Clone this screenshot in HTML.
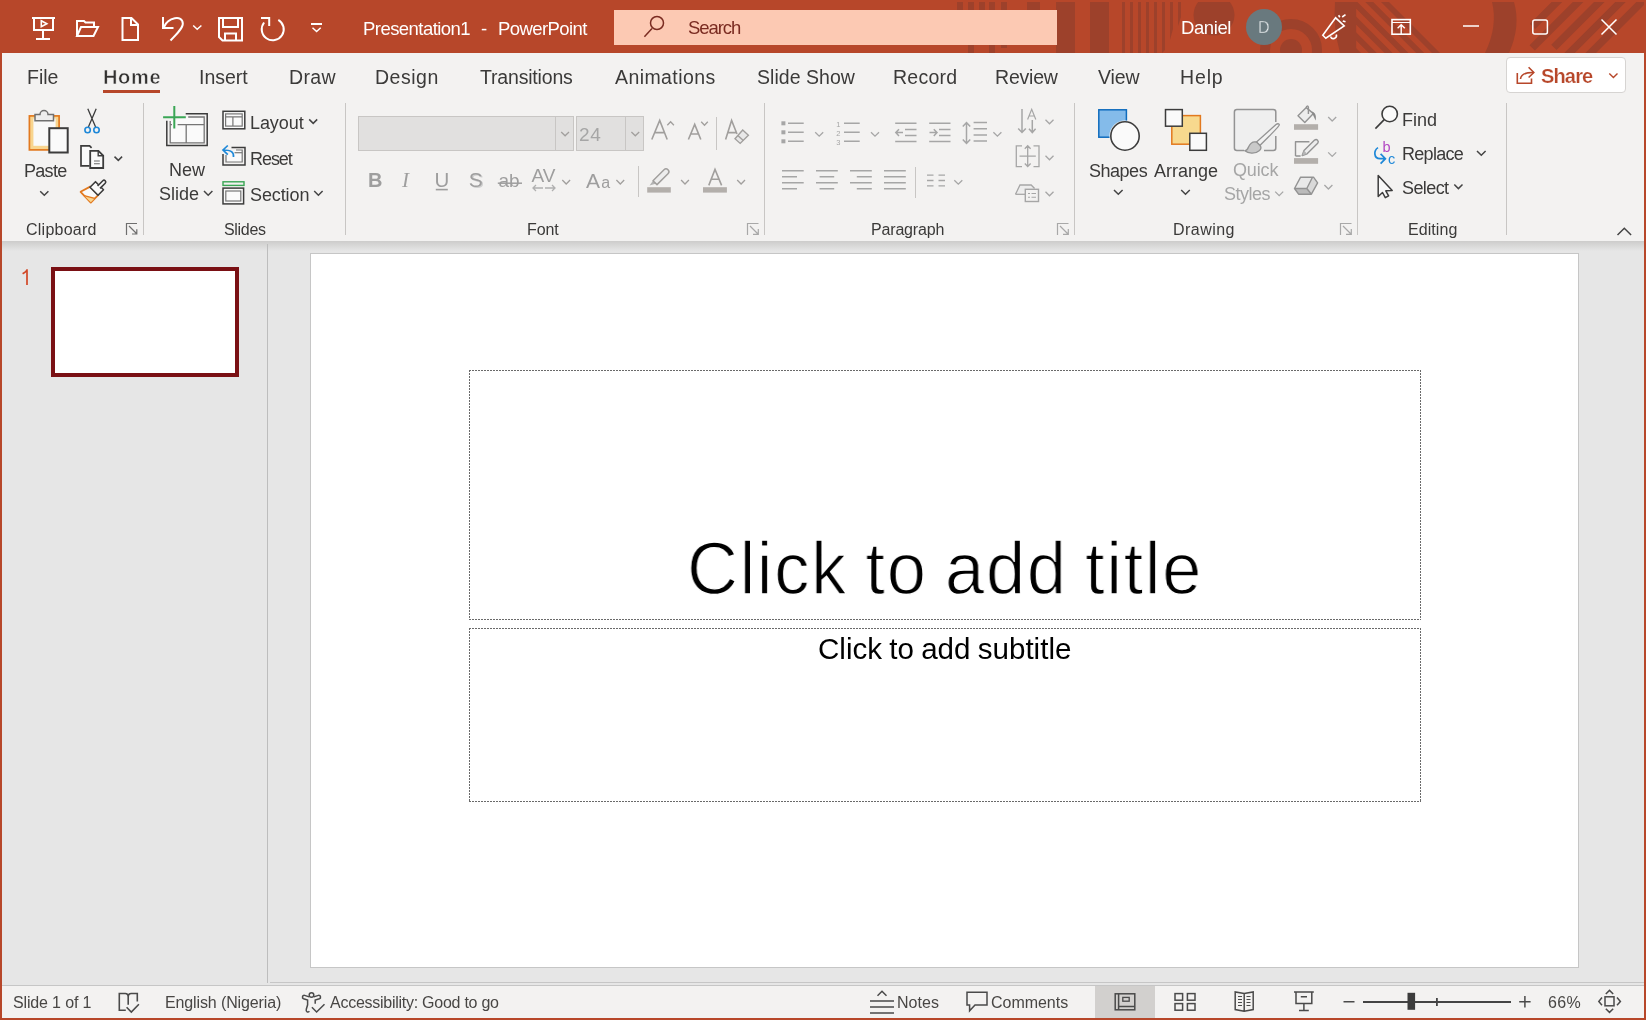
<!DOCTYPE html>
<html><head><meta charset="utf-8">
<style>
*{margin:0;padding:0;box-sizing:border-box}
html,body{width:1646px;height:1020px;overflow:hidden;background:#B7472A;font-family:"Liberation Sans",sans-serif;position:relative}
.a{position:absolute}
.t{position:absolute;white-space:nowrap;line-height:1;will-change:transform}
svg.ov{position:absolute;left:0;top:0;width:1646px;height:1020px;will-change:transform}
</style></head><body>
<!-- ribbon background -->
<div class="a" style="left:2px;top:53px;width:1642px;height:188px;background:#F3F2F1"></div>
<!-- main area -->
<div class="a" style="left:2px;top:241px;width:1642px;height:744px;background:#E6E6E6"></div>
<div class="a" style="left:2px;top:241px;width:1642px;height:10px;background:linear-gradient(#CDCCCB,#E6E6E6)"></div>
<!-- status bar -->
<div class="a" style="left:270px;top:982px;width:1374px;height:1px;background:#C6C6C6"></div>
<div class="a" style="left:2px;top:985px;width:1642px;height:1px;background:#C6C6C6"></div>
<div class="a" style="left:2px;top:986px;width:1642px;height:32px;background:#F3F2F1"></div>
<div class="a" style="left:1095px;top:986px;width:60px;height:32px;background:#D2D0CE"></div>
<!-- panel separator -->
<div class="a" style="left:267px;top:244px;width:1px;height:739px;background:#BDBDBD"></div>
<!-- thumbnail -->
<div class="a" style="left:51px;top:267px;width:188px;height:110px;border:4px solid #7A1014;background:#fff"></div>
<!-- slide -->
<div class="a" style="left:310px;top:253px;width:1269px;height:715px;background:#fff;border:1px solid #C6C6C6"></div>
<!-- share button -->
<div class="a" style="left:1506px;top:57px;width:120px;height:36px;background:#fff;border:1px solid #D6D4D2;border-radius:4px"></div>
<!-- font boxes -->
<div class="a" style="left:358px;top:116px;width:216px;height:35px;background:#E1E0DF;border:1px solid #C8C6C4"></div>
<div class="a" style="left:555px;top:117px;width:1px;height:33px;background:#C8C6C4"></div>
<div class="a" style="left:576px;top:116px;width:68px;height:35px;background:#E1E0DF;border:1px solid #C8C6C4"></div>
<div class="a" style="left:625px;top:117px;width:1px;height:33px;background:#C8C6C4"></div>
<svg class="ov" viewBox="0 0 1646 1020">
<defs>
<clipPath id="tb"><rect x="0" y="2" width="1644" height="51"/></clipPath>
<clipPath id="st1"><path d="M1356,2 H1390 L1441,53 H1356 Z"/></clipPath>
<clipPath id="st2"><path d="M1529,2 H1644 V53 H1529 Z"/></clipPath>
</defs>
<!-- ===== title bar pattern ===== -->
<g clip-path="url(#tb)" fill="#9D412B">
 <rect x="957" y="2" width="6" height="8"/>
 <rect x="968" y="2" width="6" height="51"/>
 <rect x="979" y="2" width="6" height="8"/>
 <rect x="989" y="2" width="6" height="51"/>
 <rect x="1001" y="2" width="6" height="46"/>
 <rect x="1027" y="2" width="13" height="8"/>
 <rect x="1056" y="2" width="19" height="51"/>
 <rect x="1090" y="2" width="19" height="51"/>
 <path d="M1122,2h3v51h-3z M1130,2h3v51h-3z M1138,2h3v51h-3z M1146,2h3v51h-3z M1154,2h3v51h-3z M1162,2h3v48l-3,3z M1170,2h3v27l-3,11z M1178,2h3v15l-3,9z"/>
 <circle cx="1214" cy="15" r="20.5"/>
 <circle cx="1291" cy="50" r="11"/>
 <circle cx="1291" cy="50" r="26" fill="none" stroke="#9D412B" stroke-width="10"/>
 <path d="M1335,2 H1356.2 V53 H1340 Q1333,28 1335,2 Z"/>
 <g clip-path="url(#st1)">
  <path d="M1365.2,2 l8,0 l60,60 l-8,0 z M1381,2 l8,0 l60,60 l-8,0 z M1349.4,2 l8,0 l60,60 l-8,0 z M1333.6,2 l8,0 l60,60 l-8,0 z M1317.8,2 l8,0 l60,60 l-8,0 z M1302,2 l8,0 l60,60 l-8,0 z"/>
 </g>
 <path d="M1492,2 Q1498,26 1485,53 H1509 Q1521,26 1514,2 Z"/>
 <g clip-path="url(#st2)">
  <path d="M1551.6,2 L1562.2,2 L1535.2,29 L1529.9,23.7 Z M1572.8,2 L1583.4,2 L1534.85,50.55 L1529.55,45.25 Z M1594,2 L1604.6,2 L1556.55,50.05 L1551.25,44.75 Z M1615.2,2 L1625.8,2 L1574.8,53 L1564.2,53 Z M1636.4,2 L1647,2 L1596,53 L1585.4,53 Z"/>
 </g>
</g>
<!-- search box -->
<rect x="614" y="10" width="443" height="35" fill="#FCC9B3"/>
<g stroke="#7A2B21" stroke-width="1.5" fill="none">
 <circle cx="657" cy="23" r="6.5"/>
 <path d="M652,28.6 L644.4,36.8"/>
</g>
<!-- avatar -->
<circle cx="1264" cy="27" r="18" fill="#69797E"/>
<!-- title icons -->
<g stroke="#fff" stroke-width="2" fill="none" stroke-linejoin="miter">
 <path d="M32,18 H55"/>
 <path d="M34,18 V30 H53 V18"/>
 <path d="M43,30 V39"/>
 <path d="M36,39 H50"/>
 <path d="M41.3,20.8 L46.8,23.7 L41.3,26.6 Z" stroke-width="1.6"/>
 <path d="M77,36 V21 H84 L85.5,22.5 H94 V26.5"/>
 <path d="M77,36 L81,27 H98 L93.5,36 Z"/>
 <path d="M122.5,18 H131.5 L138,24.5 V40 H122.5 Z"/>
 <path d="M131,18 V25 H138"/>
 <path d="M163,17 V28 H173.5"/>
 <path d="M164,27 C168,17.5 182.5,14.5 182.8,23.5 C183,28 177,34 170.5,40.5"/>
 <path d="M193.2,25.5 L197.2,29.3 L201.4,25.5" stroke-width="1.5"/>
 <path d="M219,18 H242 V40.5 H222.5 L219,37 Z"/>
 <path d="M223,18 V27 H238 V18"/>
 <path d="M225,40.5 V33.5 H236 V40.5"/>
 <path d="M278.3,19.8 A11,11 0 1 1 264.1,22.5"/>
 <path d="M261,18 H269.2 V26"/>
 <path d="M311,24 H322"/>
 <path d="M312.5,27.7 L316.6,31.5 L320.7,27.7" stroke-width="1.5"/>
</g>
<g stroke="#fff" stroke-width="1.6" fill="none">
 <path d="M1322.8,35.2 L1335.6,17.8 L1344.2,25.8 L1325.8,38.2 Z"/>
 <path d="M1330.5,36.5 A3,3 0 0 0 1336.3,34.6"/>
 <path d="M1338.6,15.3 L1339.8,17.2 M1342.2,17 L1345.5,14.6 M1342.8,20.9 L1345.5,21.8"/>
 <rect x="1392" y="19.6" width="18.3" height="14.6"/>
 <path d="M1392,22.5 H1410.3" stroke-width="1"/>
 <path d="M1401.2,34 V24.8 M1397.6,28.2 L1401.2,24.8 L1404.8,28.2" stroke-width="1.4"/>
 <path d="M1463,26 H1479" stroke-width="1.5"/>
 <rect x="1532.8" y="20" width="14.6" height="14" rx="2" stroke-width="1.5"/>
 <path d="M1601.5,19.5 L1616.5,34.5 M1616.5,19.5 L1601.5,34.5" stroke-width="1.5"/>
</g>
<!-- ===== ribbon separators ===== -->
<g fill="#C8C6C4">
 <rect x="143" y="103" width="1" height="132"/>
 <rect x="345" y="103" width="1" height="132"/>
 <rect x="764" y="103" width="1" height="132"/>
 <rect x="1074" y="103" width="1" height="132"/>
 <rect x="1357" y="103" width="1" height="132"/>
 <rect x="1506" y="103" width="1" height="132"/>
 <rect x="716" y="117" width="1" height="33"/>
 <rect x="638" y="166" width="1" height="31"/>
 <rect x="915" y="167" width="1" height="31"/>
</g>
<!-- home underline -->
<rect x="103" y="90" width="57" height="3" fill="#B7472A"/>
<!-- share icon + chevron -->
<g stroke="#B7472A" stroke-width="1.6" fill="none">
 <path d="M1517.3,73 V83.3 H1531.5 V78.5"/>
 <path d="M1520.5,79 C1521,74 1525,72.3 1533.5,72.5"/>
 <path d="M1528.6,67.2 L1533.8,72.5 L1528.6,77.5"/>
 <path d="M1609.3,73.5 L1613.4,77.6 L1617.5,73.5" stroke-width="1.4"/>
</g>
<!-- collapse ribbon chevron -->
<path d="M1617.5,235 L1624.3,228.3 L1631.1,235" stroke="#444" stroke-width="1.5" fill="none"/>
<!-- dialog launchers -->
<g stroke="#6E6E6E" stroke-width="1.2" fill="none">
 <path d="M126.5,235 V223.5 H137"/><path d="M129,226 L136.5,233.5 M132,234 H136.8 V229.2"/>
</g>
<g stroke="#A8A8A8" stroke-width="1.2" fill="none">
 <path d="M747.5,235 V223.5 H758.5"/><path d="M750,226 L758,234 M753,234.3 H758.3 V229"/>
 <path d="M1057.5,235 V223.5 H1068.5"/><path d="M1060,226 L1068,234 M1063,234.3 H1068.3 V229"/>
 <path d="M1340.5,235 V223.5 H1351.5"/><path d="M1343,226 L1351,234 M1346,234.3 H1351.3 V229"/>
</g>
<!-- ===== clipboard ===== -->
<rect x="29.4" y="115.9" width="29.7" height="34" fill="#F8D58F" stroke="#E2791F" stroke-width="1.7"/>
<rect x="33.4" y="118.5" width="22.2" height="27.3" fill="#F9F9F9"/>
<path d="M35,120.8 V114.5 H40 A4,4 0 0 1 48,114.5 H53.5 V120.8 Z" fill="#EDEDED" stroke="#707070" stroke-width="1.5"/>
<rect x="49.3" y="128.2" width="18.4" height="24.3" fill="#FAFAFA" stroke="#3C3C3C" stroke-width="2"/>
<path d="M40.2,191.2 L44.3,195.2 L48.4,191.2" stroke="#444" stroke-width="1.5" fill="none"/>
<g stroke="#3C3C3C" stroke-width="1.3" fill="none">
 <path d="M87.8,108.8 L95.6,127 M96.2,108.8 L88.4,127"/>
</g>
<circle cx="87.6" cy="130" r="2.7" stroke="#1E88D8" stroke-width="1.6" fill="none"/>
<circle cx="96.5" cy="130" r="2.7" stroke="#1E88D8" stroke-width="1.6" fill="none"/>
<path d="M89.5,165.8 H81 V145.8 H89.6 L91.6,147.8" stroke="#3C3C3C" stroke-width="1.7" fill="#FAFAFA"/>
<path d="M90.2,150.8 H98.4 L103.2,155.6 V168 H90.2 Z" fill="#FAFAFA" stroke="#3C3C3C" stroke-width="1.8"/>
<path d="M98.2,150.8 V155.8 H103.2" stroke="#3C3C3C" stroke-width="1.4" fill="none"/>
<path d="M94,161 H99.8 M94,163.8 H99.8" stroke="#6A6A6A" stroke-width="1.1"/>
<path d="M114.5,156.6 L118.3,160.4 L122.1,156.6" stroke="#444" stroke-width="1.5" fill="none"/>
<!-- format painter -->
<path d="M80.6,191.8 L90.2,186.6 L98.4,194.8 L90.8,202.6 Z" fill="#FAFAFA" stroke="#E2791F" stroke-width="1.8" stroke-linejoin="round"/>
<path d="M84,195.6 L94.6,198.6 L90.8,202.2 Z" fill="#F8D58F"/>
<path d="M84,195.6 L94.8,198.4" stroke="#E2791F" stroke-width="1.4"/>
<path d="M90,187.2 L95.5,181.7 L103.5,189.7 L98,195.2 Z" fill="#FAFAFA" stroke="#3C3C3C" stroke-width="1.6" stroke-linejoin="round"/>
<path d="M97.6,186 L102.8,180.8 A1.6,1.6 0 0 1 105.2,183.2 L100,188.4" fill="#FAFAFA" stroke="#3C3C3C" stroke-width="1.6"/>
<!-- ===== slides ===== -->
<path d="M170.2,121 V142.8 H204.2 V117 H188.2 M177.6,124.6 H204.2 M186.2,124.6 V142.8 M169.8,124.6 H172" stroke="#767676" stroke-width="1.3" fill="#FAFAFA"/>
<path d="M166.8,120.7 V145.6 H207.2 V113.7 H185.7" stroke="#3C3C3C" stroke-width="1.5" fill="none"/>
<path d="M174.3,106 V128.6 M163.1,117.3 H185.8" stroke="#3AA655" stroke-width="2" fill="none"/>
<path d="M204,191 L208.2,195.2 L212.4,191" stroke="#444" stroke-width="1.5" fill="none"/>
<!-- layout -->
<rect x="223" y="111.3" width="21.8" height="17.5" fill="#FAFAFA" stroke="#3C3C3C" stroke-width="1.5"/>
<rect x="225.6" y="113.9" width="16.6" height="12.2" fill="#FAFAFA" stroke="#767676" stroke-width="1.2"/>
<path d="M225.6,116.8 H242.2 M232.9,116.8 V126.1" stroke="#767676" stroke-width="1.2"/>
<path d="M309.2,119.4 L313.2,123.4 L317.2,119.4" stroke="#444" stroke-width="1.5" fill="none"/>
<!-- reset -->
<path d="M223,154 V165 H245 V147.5 H231.5" stroke="#3C3C3C" stroke-width="1.5" fill="none"/>
<path d="M226,155 V162 H242.2 V150 H236" stroke="#767676" stroke-width="1.2" fill="#FAFAFA"/>
<path d="M234.5,152.7 H242.2" stroke="#767676" stroke-width="1.2"/>
<path d="M233.5,157 C234,152 231,150 223,150 M227.8,145.5 L223,150 L227.8,154.6" stroke="#1E88D8" stroke-width="1.7" fill="none"/>
<!-- section -->
<rect x="223" y="181.8" width="21" height="3.6" fill="none" stroke="#3AA655" stroke-width="1.4"/>
<rect x="223" y="188.1" width="20.6" height="15.8" fill="#FAFAFA" stroke="#3C3C3C" stroke-width="1.5"/>
<rect x="225.8" y="191" width="15" height="10" fill="#FAFAFA" stroke="#767676" stroke-width="1.2"/>
<path d="M314.2,191 L318.4,195.2 L322.6,191" stroke="#444" stroke-width="1.5" fill="none"/>

<!-- ===== font group ===== -->
<g stroke="#A19F9D" stroke-width="1.3" fill="none">
 <path d="M561.2,132 L565.1,135.8 L569,132"/>
 <path d="M631.4,132 L635.3,135.8 L639.2,132"/>
</g>
<g stroke="#A19F9D" stroke-width="1.6" fill="none" stroke-linejoin="miter">
 <path d="M651.8,139.5 L659.7,120.5 L667.2,139.5 M654.6,132.6 H664.6"/>
 <path d="M667.3,125.3 L670.6,121.8 L673.9,125.3" stroke-width="1.3"/>
 <path d="M688.4,139.5 L694.7,124.4 L700.8,139.5 M690.7,134 H698.5"/>
 <path d="M701.2,121.8 L704.5,125.3 L707.8,121.8" stroke-width="1.3"/>
 <path d="M725.6,139.5 L731.6,120.5 L737,134 M727.8,132.6 H736"/>
</g>
<path d="M735,138.8 L742.7,130 L748.4,135.2 L740.2,143.4 Z" fill="#E8E8E8" stroke="#A19F9D" stroke-width="1.4"/>
<path d="M737.8,135.5 L743.3,140.6" stroke="#A19F9D" stroke-width="1.4"/>
<g fill="#9E9E9E" font-family="Liberation Sans">
 <text x="368" y="187" font-size="20" font-weight="700">B</text>
 <text x="402" y="187" font-size="21" font-family="Liberation Serif" font-style="italic">I</text>
 <text x="434.6" y="186.8" font-size="20.5">U</text>
 <text x="470" y="187.6" font-size="21" fill="#D0D0D0">S</text><text x="468.8" y="186.8" font-size="21">S</text>
 <text x="498.5" y="186.8" font-size="19">ab</text>
 <text x="531.5" y="182.4" font-size="19">AV</text>
 <text x="586" y="188.4" font-size="21">A</text>
 <text x="601.2" y="188.4" font-size="16">a</text>
</g>
<path d="M435.8,189.6 H447.8" stroke="#9E9E9E" stroke-width="1.6"/>
<path d="M497.8,183.2 H522" stroke="#9E9E9E" stroke-width="1.5"/>
<path d="M533,188 H543 M536,185 L533,188 L536,191 M545,188 H555 M552,185 L555,188 L552,191" stroke="#B0B0B0" stroke-width="1.3" fill="none"/>
<g stroke="#A19F9D" stroke-width="1.3" fill="none">
 <path d="M562.3,180 L566.2,184 L570.1,180"/>
 <path d="M616.4,180 L620.3,184 L624.2,180"/>
 <path d="M681.1,180 L685,184 L688.9,180"/>
 <path d="M737.2,180 L741.1,184 L745,180"/>
</g>
<rect x="647.2" y="187.2" width="23.6" height="5.4" fill="#B3AFAB"/>
<rect x="703" y="187.2" width="23.9" height="5.4" fill="#B3AFAB"/>
<path d="M649.5,185.6 L653,180.8 L656.6,183.6 Z" fill="#B3B3B3"/>
<path d="M653,180.8 L664,169.8 A2.6,2.6 0 0 1 668,173.8 L657,184.6 Z" fill="#EDEDED" stroke="#A19F9D" stroke-width="1.5" stroke-linejoin="round"/>
<path d="M708.8,185.4 L715,169.4 L721.6,185.4 M711.2,179.2 H719.2" stroke="#A19F9D" stroke-width="1.6" fill="none"/>
<!-- ===== paragraph group ===== -->
<g fill="#A6A6A6">
 <rect x="781.4" y="121.3" width="4" height="4"/>
 <rect x="781.4" y="130.3" width="4" height="4"/>
 <rect x="781.4" y="139.3" width="4" height="4"/>
</g>
<g stroke="#A6A6A6" stroke-width="1.5" fill="none">
 <path d="M788,123.3 H803.7 M788,132.3 H803.7 M788,141.3 H803.7"/>
 <path d="M844,123.3 H859.7 M844,132.3 H859.7 M844,141.3 H859.7"/>
 <path d="M895.2,123.2 H916.5 M905,129.6 H916.5 M905,135.6 H916.5 M895.2,141.5 H916.5 M903,132.6 H896 M899,129.2 L895.8,132.6 L899,136"/>
 <path d="M929.2,123.2 H950.5 M939,129.6 H950.5 M939,135.6 H950.5 M929.2,141.5 H950.5 M929.5,132.6 H937 M933.8,129.2 L937,132.6 L933.8,136"/>
 <path d="M966.5,123 V143 M962.8,126.5 L966.5,122.5 L970.2,126.5 M962.8,139.5 L966.5,143.5 L970.2,139.5"/>
 <path d="M973.6,122.5 H987 M973.6,128.7 H987 M973.6,134.9 H987 M973.6,141.1 H987"/>
 <path d="M1022,109 V132.5 M1018.2,128.5 L1022,132.5 L1025.8,128.5 M1032.3,120 V132.5 M1029,128.8 L1032.3,132.5 L1035.6,128.8"/>
 <path d="M1027.6,119.5 L1031.7,109.3 L1035.8,119.5 M1029,116 H1034.3" stroke-width="1.2"/>
 <path d="M1022,145.8 H1016.3 V166.6 H1022 M1033.5,145.8 H1039 V166.6 H1033.5 M1019.5,156.2 H1035.8 M1027.7,146 V166.5 M1024.8,148.8 L1027.7,145.8 L1030.6,148.8 M1024.8,163.5 L1027.7,166.5 L1030.6,163.5" stroke-width="1.3"/>
 <path d="M782,170.8 H803.7 M782,176.8 H797 M782,182.8 H803.7 M782,188.8 H797"/>
 <path d="M816,170.8 H837.8 M819.6,176.8 H834.2 M816,182.8 H837.8 M819.6,188.8 H834.2"/>
 <path d="M850,170.8 H871.8 M856.8,176.8 H871.8 M850,182.8 H871.8 M856.8,188.8 H871.8"/>
 <path d="M884,170.8 H905.8 M884,176.8 H905.8 M884,182.8 H905.8 M884,188.8 H905.8"/>
 <path d="M927,175.2 H933.5 M927,180.5 H933.5 M927,185.8 H933.5 M938.5,175.2 H945 M938.5,180.5 H945 M938.5,185.8 H945" stroke-width="1.3"/>
</g>
<g fill="#A6A6A6" font-family="Liberation Sans" font-size="7.5">
 <text x="836.3" y="127.2">1</text><text x="836.3" y="136.2">2</text><text x="836.3" y="145">3</text>
</g>
<g stroke="#A6A6A6" stroke-width="1.3" fill="none">
 <path d="M815.2,132.2 L819.2,136.2 L823.2,132.2"/>
 <path d="M871,132.2 L875,136.2 L879,132.2"/>
 <path d="M993.4,132.2 L997.4,136.2 L1001.4,132.2"/>
 <path d="M1045.5,119.8 L1049.5,123.8 L1053.5,119.8"/>
 <path d="M1045.5,155.8 L1049.5,159.8 L1053.5,155.8"/>
 <path d="M1045.5,191.8 L1049.5,195.8 L1053.5,191.8"/>
 <path d="M954.3,180.2 L958.3,184.2 L962.3,180.2"/>
</g>
<path d="M1015.5,194.3 L1020,185 H1031.2 L1034.6,188.5" fill="#EDEDED" stroke="#A6A6A6" stroke-width="1.3"/>
<path d="M1015.5,194.3 H1026" stroke="#A6A6A6" stroke-width="1.3"/>
<rect x="1025.3" y="189.3" width="13.2" height="12.2" fill="#F3F2F1" stroke="#A6A6A6" stroke-width="1.4"/>
<path d="M1028,193.5 H1030 M1031.5,193.5 H1036 M1028,197.2 H1030 M1031.5,197.2 H1036" stroke="#A6A6A6" stroke-width="1.1"/>
<!-- ===== drawing group ===== -->
<rect x="1098.8" y="109.8" width="27.6" height="27.4" fill="#84BBEA" stroke="#0F6CBD" stroke-width="1.5"/>
<circle cx="1125" cy="136" r="15.6" fill="#F3F2F1"/>
<circle cx="1125" cy="136" r="14.2" fill="#FAFAFA" stroke="#3C3C3C" stroke-width="1.6"/>
<path d="M1114,190 L1118.3,194.3 L1122.6,190" stroke="#444" stroke-width="1.5" fill="none"/>
<rect x="1171.8" y="115.6" width="28.6" height="28.6" fill="#F7D98E" stroke="#E2791F" stroke-width="1.5"/>
<rect x="1165.5" y="109.6" width="16.8" height="16.6" fill="#FAFAFA" stroke="#3C3C3C" stroke-width="1.5"/>
<rect x="1189.8" y="133.3" width="16.6" height="17" fill="#FAFAFA" stroke="#3C3C3C" stroke-width="1.5"/>
<path d="M1181.2,190 L1185.5,194.3 L1189.8,190" stroke="#444" stroke-width="1.5" fill="none"/>
<rect x="1234.4" y="109.4" width="41.4" height="41" rx="2.5" fill="#EFEFEF" stroke="none"/>
<path d="M1244,150.4 H1236.9 A2.5,2.5 0 0 1 1234.4,147.9 V111.9 A2.5,2.5 0 0 1 1236.9,109.4 H1273.3 A2.5,2.5 0 0 1 1275.8,111.9 V122 M1275.8,136 V147.9 A2.5,2.5 0 0 1 1273.3,150.4 H1264" fill="none" stroke="#939393" stroke-width="1.5"/>
<path d="M1279,125.5 C1280,124 1278,123 1276,124.5 L1256.5,142 L1260,145.5 C1266,139 1276,130 1279,125.5 Z" fill="#F2F2F2" stroke="#939393" stroke-width="1.3"/>
<path d="M1256.5,142 C1252,141 1250,143.5 1248.5,147 C1247.8,149 1246.5,150.5 1244.8,150.8 C1248,153.5 1255,154.5 1259.5,150.5 C1261,149 1261.3,147 1260,145.5 Z" fill="#C9C9C9" stroke="#939393" stroke-width="1.3"/>
<path d="M1275.2,191.6 L1279.2,195.6 L1283.2,191.6" stroke="#A6A6A6" stroke-width="1.3" fill="none"/>
<g stroke="#939393" stroke-width="1.4" fill="none" stroke-linejoin="round">
 <path d="M1298,115.8 L1306.3,107.6 L1313.4,113.6 L1304.8,122.4 Z" fill="#EDEDED"/>
 <path d="M1306.3,107.6 C1306.3,105.6 1308.4,105.6 1308.4,107.4 V114"/>
 <path d="M1295.5,156 V141.7 H1309.4 M1295.5,156 H1300.6"/>
 <path d="M1302.2,155.6 L1304,150.6 L1314.6,140.1 A2.2,2.2 0 0 1 1317.7,143.2 L1307.1,153.8 Z" fill="#EDEDED"/>
 <path d="M1328.2,117 L1332.2,121 L1336.2,117" stroke="#A6A6A6" stroke-width="1.3"/>
 <path d="M1328.2,152.4 L1332.2,156.4 L1336.2,152.4" stroke="#A6A6A6" stroke-width="1.3"/>
 <path d="M1324.4,185 L1328.4,189 L1332.4,185" stroke="#A6A6A6" stroke-width="1.3"/>
</g>
<path d="M1311.8,111.5 C1315.5,112.5 1316.5,116 1315.6,120.6 L1313,115 Z" fill="#8A8A8A"/>
<path d="M1302.2,155.6 L1304,150.6 L1307.1,153.8 Z" fill="#B5B5B5"/>
<rect x="1294" y="124.2" width="24.1" height="5.6" fill="#B3AFAB"/>
<rect x="1294" y="158.1" width="24.1" height="5.7" fill="#B3AFAB"/>
<path d="M1294.5,188.5 L1300.6,177.2 H1313.5 L1317.6,182.8 L1311.4,194.2 H1298.6 Z" fill="#E9E9E9"/>
<path d="M1294.5,188.5 H1306.8 L1311.4,194.2 H1298.6 Z" fill="#BBBBBB"/>
<path d="M1306.8,188.5 L1312.5,177.2 L1317.6,182.8 L1311.4,194.2 Z" fill="#D9D9D9"/>
<path d="M1294.5,188.5 L1300.6,177.2 H1313.5 L1317.6,182.8 L1311.4,194.2 H1298.6 Z M1294.5,188.5 H1306.8 L1312.5,177.2 M1306.8,188.5 L1311.4,194.2" fill="none" stroke="#939393" stroke-width="1.4" stroke-linejoin="round"/>
<!-- ===== editing group ===== -->
<circle cx="1389.7" cy="114" r="7.7" fill="#FAFAFA" stroke="#3C3C3C" stroke-width="1.6"/>
<path d="M1384.2,119.6 L1375.4,128.6" stroke="#3C3C3C" stroke-width="1.6"/>
<text x="1382.4" y="151.6" font-family="Liberation Sans" font-size="14.5" fill="#B146C2">b</text>
<text x="1388" y="163.6" font-family="Liberation Sans" font-size="14.5" fill="#1E88D8">c</text>
<path d="M1378,147.6 C1373.5,150.5 1373.5,158.5 1380,158.7 H1385 M1380.6,153.8 L1385.4,158.7 L1380.6,163.6" stroke="#1E88D8" stroke-width="1.7" fill="none"/>
<path d="M1477,151 L1481.3,155.3 L1485.6,151" stroke="#444" stroke-width="1.5" fill="none"/>
<path d="M1378.2,175.6 V196.5 L1382.5,192.5 L1385.3,197.6 L1388.6,195.8 L1385.8,190.8 L1392.2,190.6 Z" fill="#F8F8F8" stroke="#3C3C3C" stroke-width="1.5" stroke-linejoin="round"/>
<path d="M1454.3,184.5 L1458.4,188.6 L1462.5,184.5" stroke="#444" stroke-width="1.5" fill="none"/>

<path d="M27,285 V269.3 M27.2,270 C25.8,271.8 24.4,272.8 22.6,273.8" stroke="#D24726" stroke-width="1.7" fill="none"/>
<!-- ===== slide placeholders ===== -->
<g fill="none" stroke="#6A6A6A" stroke-width="1" stroke-dasharray="2 1" shape-rendering="crispEdges">
 <path d="M469,370.5 H1421 M469,619.5 H1421 M469.5,370 V620 M1420.5,370 V620"/>
 <path d="M469,628.5 H1421 M469,801.5 H1421 M469.5,628 V802 M1420.5,628 V802"/>
</g>
<!-- ===== status bar icons ===== -->
<g stroke="#4A4A4A" stroke-width="1.5" fill="none">
 <path d="M125.8,1010.2 H119.3 V993.5 H125.2 C127,993.5 128.2,995 128.2,997 V1004.8 M128.2,997 C128.2,995 129.5,993.5 131.2,993.5 H137.3 V1001.5" stroke-width="1.6"/>
 <path d="M126.6,1007.3 L131.3,1012 L138.9,1004.2" stroke-width="1.6"/>
 <circle cx="311.5" cy="995" r="2.3" stroke-width="1.5"/>
 <path d="M309.2,996.9 L304.6,995.4 C302.4,994.8 301.6,998 303.6,998.8 L307.6,1000 V1004.8 L306.3,1009.2 C305.6,1012 308,1012.8 309.4,1011.2" stroke-width="1.5"/>
 <path d="M313.8,996.9 L318.4,995.4 C320.6,994.8 321.4,998 319.4,998.8 L315.2,1000 V1003.8" stroke-width="1.5"/>
 <path d="M311.9,1007.3 L316.6,1012 L324.5,1004.2" stroke-width="1.5"/>
 <path d="M870,1001 H894 M870,1007 H894 M870,1013 H894"/>
 <path d="M877.5,995.8 L882,991.3 L886.5,995.8"/>
 <path d="M967,992.2 H987 V1005 H975 L969.6,1010.8 V1005 H967 Z"/>
 <rect x="1115.2" y="993.8" width="19.6" height="16"/>
 <path d="M1118.6,993.8 V1009.8 M1118.6,1006.6 H1134.8"/>
 <rect x="1122.8" y="997.4" width="6.4" height="3.8" stroke-width="1.3"/>
 <rect x="1175" y="993.6" width="7.6" height="6.6"/><rect x="1187.4" y="993.6" width="7.6" height="6.6"/>
 <rect x="1175" y="1003.6" width="7.6" height="6.6"/><rect x="1187.4" y="1003.6" width="7.6" height="6.6"/>
 <path d="M1244.2,1011.2 L1235.2,1009.6 V992 L1244.2,993.6 L1253.2,992 V1009.6 Z M1244.2,993.6 V1011.2"/>
 <path d="M1238,996.5 H1242 M1238,999.5 H1242 M1238,1002.5 H1242 M1238,1005.5 H1242 M1246.5,996.5 H1250.5 M1246.5,999.5 H1250.5 M1246.5,1002.5 H1250.5 M1246.5,1005.5 H1250.5" stroke-width="1.2"/>
 <path d="M1294,992 H1313.8 M1296,992 V1003.6 H1311.8 V992 M1303.9,1003.6 V1010.6 M1299,1010.6 H1308.8 M1300.8,996.8 H1307"/>
 <path d="M1343.5,1001.8 H1354.5 M1519.2,1001.8 H1530.6 M1524.9,996 V1007.6"/>
 <rect x="1605" y="996.8" width="9" height="9"/>
 <path d="M1605.8,994 L1609.5,990.4 L1613.2,994 M1605.8,1008.8 L1609.5,1012.4 L1613.2,1008.8 M1602,997.6 L1598.8,1001.4 L1602,1005.2 M1617,997.6 L1620.4,1001.4 L1617,1005.2"/>
</g>
<rect x="1363" y="1001" width="148" height="2" fill="#444"/>
<rect x="1407.5" y="992.8" width="7.6" height="17" fill="#3C3C3C"/>
<rect x="1436" y="998" width="1.8" height="8" fill="#444"/>

</svg>

<div class="t" style="left:363.0px;top:20px;font-size:18.5px;font-weight:400;letter-spacing:-0.55px;color:#fff;transform-origin:0 0;">Presentation1</div>
<div class="t" style="left:497.8px;top:20px;font-size:18.5px;font-weight:400;letter-spacing:-0.58px;color:#fff;transform-origin:0 0;">PowerPoint</div>
<div class="t" style="left:687.8px;top:19px;font-size:18.5px;font-weight:400;letter-spacing:-1.08px;color:#7A2B21;transform-origin:0 0;">Search</div>
<div class="t" style="left:1181.2px;top:19px;font-size:18.5px;font-weight:400;letter-spacing:-0.40px;color:#fff;transform-origin:0 0;">Daniel</div>
<div class="t" style="left:1258.0px;top:20px;font-size:16px;font-weight:400;letter-spacing:0.00px;color:#E8ECEE;transform-origin:0 0;-webkit-text-stroke:0.3px #69797E">D</div>
<div class="t" style="left:26.5px;top:68px;font-size:19.5px;font-weight:400;letter-spacing:0.00px;color:#3B3A39;transform-origin:0 0;">File</div>
<div class="t" style="left:102.5px;top:67px;font-size:20px;font-weight:700;letter-spacing:0.67px;color:#323130;transform-origin:0 0;-webkit-text-stroke:0.5px #F3F2F1">Home</div>
<div class="t" style="left:199.0px;top:68px;font-size:19.5px;font-weight:400;letter-spacing:0.00px;color:#3B3A39;transform-origin:0 0;">Insert</div>
<div class="t" style="left:289.0px;top:68px;font-size:19.5px;font-weight:400;letter-spacing:0.33px;color:#3B3A39;transform-origin:0 0;">Draw</div>
<div class="t" style="left:374.6px;top:68px;font-size:19.5px;font-weight:400;letter-spacing:0.52px;color:#3B3A39;transform-origin:0 0;">Design</div>
<div class="t" style="left:479.7px;top:68px;font-size:19.5px;font-weight:400;letter-spacing:-0.18px;color:#3B3A39;transform-origin:0 0;">Transitions</div>
<div class="t" style="left:615.3px;top:68px;font-size:19.5px;font-weight:400;letter-spacing:0.42px;color:#3B3A39;transform-origin:0 0;">Animations</div>
<div class="t" style="left:756.5px;top:68px;font-size:19.5px;font-weight:400;letter-spacing:0.04px;color:#3B3A39;transform-origin:0 0;">Slide Show</div>
<div class="t" style="left:892.5px;top:68px;font-size:19.5px;font-weight:400;letter-spacing:0.24px;color:#3B3A39;transform-origin:0 0;">Record</div>
<div class="t" style="left:994.5px;top:68px;font-size:19.5px;font-weight:400;letter-spacing:-0.20px;color:#3B3A39;transform-origin:0 0;">Review</div>
<div class="t" style="left:1098.3px;top:68px;font-size:19.5px;font-weight:400;letter-spacing:-0.07px;color:#3B3A39;transform-origin:0 0;">View</div>
<div class="t" style="left:1179.7px;top:68px;font-size:19.5px;font-weight:400;letter-spacing:0.87px;color:#3B3A39;transform-origin:0 0;">Help</div>
<div class="t" style="left:1540.7px;top:66px;font-size:20px;font-weight:700;letter-spacing:-0.85px;color:#B7472A;transform-origin:0 0;-webkit-text-stroke:0.2px #fff">Share</div>
<div class="t" style="left:24.0px;top:162px;font-size:18px;font-weight:400;letter-spacing:-0.70px;color:#3B3A39;transform-origin:0 0;">Paste</div>
<div class="t" style="left:169.0px;top:161px;font-size:18px;font-weight:400;letter-spacing:0.00px;color:#3B3A39;transform-origin:0 0;">New</div>
<div class="t" style="left:158.5px;top:185px;font-size:18px;font-weight:400;letter-spacing:0.00px;color:#3B3A39;transform-origin:0 0;">Slide</div>
<div class="t" style="left:250.0px;top:114px;font-size:18px;font-weight:400;letter-spacing:-0.08px;color:#3B3A39;transform-origin:0 0;">Layout</div>
<div class="t" style="left:250.0px;top:150px;font-size:18px;font-weight:400;letter-spacing:-1.05px;color:#3B3A39;transform-origin:0 0;">Reset</div>
<div class="t" style="left:250.0px;top:186px;font-size:18px;font-weight:400;letter-spacing:-0.10px;color:#3B3A39;transform-origin:0 0;">Section</div>
<div class="t" style="left:25.6px;top:222px;font-size:16px;font-weight:400;letter-spacing:0.25px;color:#3B3A39;transform-origin:0 0;">Clipboard</div>
<div class="t" style="left:223.9px;top:222px;font-size:16px;font-weight:400;letter-spacing:-0.32px;color:#3B3A39;transform-origin:0 0;">Slides</div>
<div class="t" style="left:527.1px;top:222px;font-size:16px;font-weight:400;letter-spacing:-0.07px;color:#3B3A39;transform-origin:0 0;">Font</div>
<div class="t" style="left:871.4px;top:222px;font-size:16px;font-weight:400;letter-spacing:-0.17px;color:#3B3A39;transform-origin:0 0;">Paragraph</div>
<div class="t" style="left:1173.2px;top:222px;font-size:16px;font-weight:400;letter-spacing:0.47px;color:#3B3A39;transform-origin:0 0;">Drawing</div>
<div class="t" style="left:1408.0px;top:222px;font-size:16px;font-weight:400;letter-spacing:0.07px;color:#3B3A39;transform-origin:0 0;">Editing</div>
<div class="t" style="left:1089.4px;top:162px;font-size:18px;font-weight:400;letter-spacing:-0.48px;color:#3B3A39;transform-origin:0 0;">Shapes</div>
<div class="t" style="left:1154.2px;top:162px;font-size:18px;font-weight:400;letter-spacing:0.00px;color:#3B3A39;transform-origin:0 0;">Arrange</div>
<div class="t" style="left:1232.7px;top:161px;font-size:18px;font-weight:400;letter-spacing:-0.15px;color:#A6A6A6;transform-origin:0 0;">Quick</div>
<div class="t" style="left:1223.5px;top:185px;font-size:18px;font-weight:400;letter-spacing:-0.48px;color:#A6A6A6;transform-origin:0 0;">Styles</div>
<div class="t" style="left:1402.0px;top:111px;font-size:18px;font-weight:400;letter-spacing:0.00px;color:#3B3A39;transform-origin:0 0;">Find</div>
<div class="t" style="left:1402.0px;top:145px;font-size:18px;font-weight:400;letter-spacing:-0.70px;color:#3B3A39;transform-origin:0 0;">Replace</div>
<div class="t" style="left:1402.0px;top:179px;font-size:18px;font-weight:400;letter-spacing:-0.60px;color:#3B3A39;transform-origin:0 0;">Select</div>
<div class="t" style="left:578.8px;top:125px;font-size:19px;font-weight:400;letter-spacing:0.60px;color:#A6A6A6;transform-origin:0 0;">24</div>
<div class="t" style="left:12.5px;top:995px;font-size:16px;font-weight:400;letter-spacing:-0.15px;color:#484644;transform-origin:0 0;">Slide 1 of 1</div>
<div class="t" style="left:164.7px;top:995px;font-size:16px;font-weight:400;letter-spacing:-0.12px;color:#484644;transform-origin:0 0;">English (Nigeria)</div>
<div class="t" style="left:329.7px;top:995px;font-size:16px;font-weight:400;letter-spacing:-0.26px;color:#484644;transform-origin:0 0;">Accessibility: Good to go</div>
<div class="t" style="left:896.7px;top:995px;font-size:16px;font-weight:400;letter-spacing:0.05px;color:#484644;transform-origin:0 0;">Notes</div>
<div class="t" style="left:991.3px;top:995px;font-size:16px;font-weight:400;letter-spacing:-0.03px;color:#484644;transform-origin:0 0;">Comments</div>
<div class="t" style="left:1548.2px;top:995px;font-size:16px;font-weight:400;letter-spacing:0.40px;color:#484644;transform-origin:0 0;">66%</div>
<div class="t" style="left:687.3px;top:531px;font-size:75px;font-weight:400;letter-spacing:1.75px;color:#000;transform-origin:0 0;-webkit-text-stroke:1.3px #fff;transform:scaleX(0.94);word-spacing:-4px">Click to add title</div>
<div class="t" style="left:818.0px;top:635px;font-size:29px;font-weight:400;letter-spacing:0.00px;color:#000;transform-origin:0 0;transform:scaleX(1.02);word-spacing:-1px">Click to add subtitle</div>
<div class="t" style="left:481.0px;top:20px;font-size:18.5px;font-weight:400;letter-spacing:0.00px;color:#fff;transform-origin:0 0;">-</div>
</body></html>
